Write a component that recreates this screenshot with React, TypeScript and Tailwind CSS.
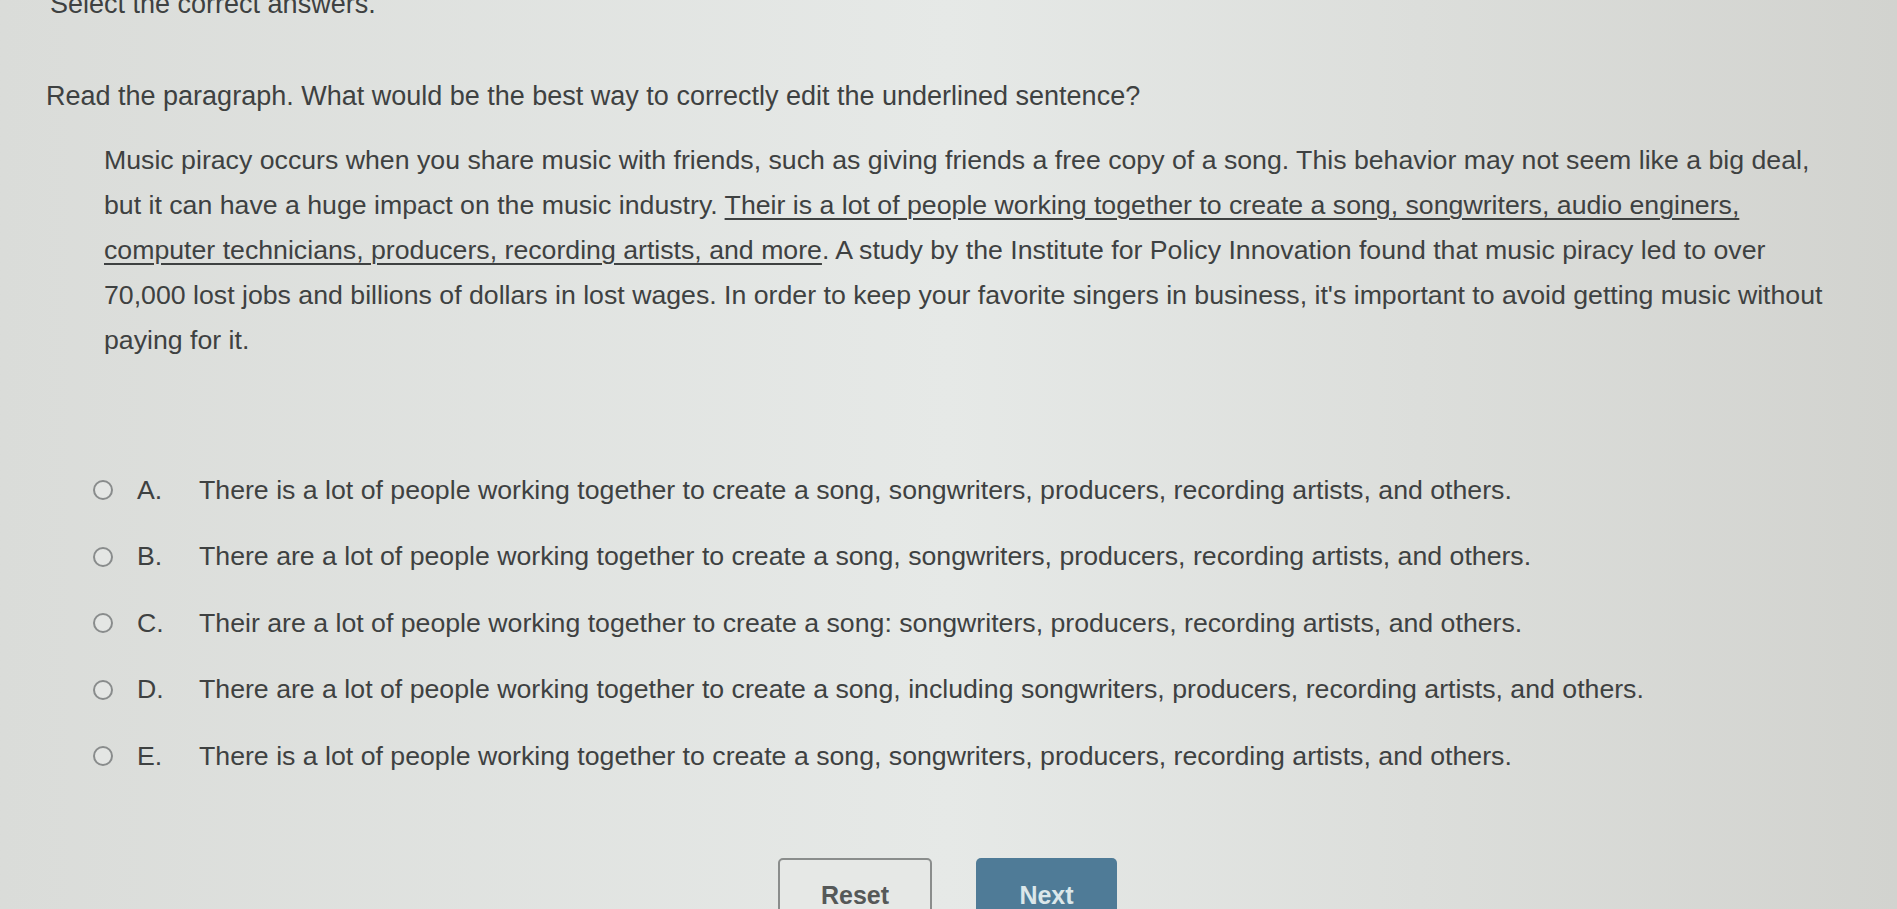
import React from "react";

const options: { letter: string; text: string }[] = [
  { letter: "A.", text: "There is a lot of people working together to create a song, songwriters, producers, recording artists, and others." },
  { letter: "B.", text: "There are a lot of people working together to create a song, songwriters, producers, recording artists, and others." },
  { letter: "C.", text: "Their are a lot of people working together to create a song: songwriters, producers, recording artists, and others." },
  { letter: "D.", text: "There are a lot of people working together to create a song, including songwriters, producers, recording artists, and others." },
  { letter: "E.", text: "There is a lot of people working together to create a song, songwriters, producers, recording artists, and others." },
];

export default function App() {
  return (
    <div
      className="w-full h-[909px] overflow-hidden bg-linear-to-r from-[#dadcd9] via-[#e6e9e7] to-[#d2d3cf] text-[#3e4141] text-[27px] leading-[45px]"
      style={{ fontFamily: '"Liberation Sans", Arial, sans-serif' }}
    >
      <div className="pl-[50px] -mt-[18px] whitespace-nowrap">Select the correct answers.</div>

      <div className="pl-[46px] mt-[47px] whitespace-nowrap">
        Read the paragraph. What would be the best way to correctly edit the underlined sentence?
      </div>

      <div className="pl-[104px] mt-[19px] whitespace-nowrap text-[26.7px]">
        <div>
          Music piracy occurs when you share music with friends, such as giving friends a free copy of a song. This behavior may not seem like a big deal,
        </div>
        <div>
          but it can have a huge impact on the music industry.{" "}
          <span className="underline decoration-2 underline-offset-[4px]">
            Their is a lot of people working together to create a song, songwriters, audio enginers,
          </span>
        </div>
        <div>
          <span className="underline decoration-2 underline-offset-[4px]">
            computer technicians, producers, recording artists, and more
          </span>
          . A study by the Institute for Policy Innovation found that music piracy led to over
        </div>
        <div>
          70,000 lost jobs and billions of dollars in lost wages. In order to keep your favorite singers in business, it's important to avoid getting music without
        </div>
        <div>paying for it.</div>
      </div>

      <div className="mt-[94px] pl-[93px] flex flex-col text-[26.7px]">
        {options.map((o) => (
          <div key={o.letter} className="h-[66.5px] flex items-center whitespace-nowrap">
            <span className="w-[20px] h-[20px] rounded-full border-2 border-[#898c8c] bg-[#e4e6e4] shrink-0" />
            <span className="ml-[24px] w-[62px] shrink-0 text-[#3e4141]">{o.letter}</span>
            <span>{o.text}</span>
          </div>
        ))}
      </div>

      <div className="mt-[68px] flex justify-center gap-[44px] pr-[2px]">
        <button className="w-[154px] h-[76px] rounded-[5px] border-2 border-[#8a8d8c] bg-[#e6e8e6] text-[#555858] text-[25px] font-bold flex items-center justify-center">
          Reset
        </button>
        <button className="w-[141px] h-[76px] rounded-[5px] bg-[#4f7b97] text-[#dbe7ea] text-[25px] font-bold flex items-center justify-center">
          Next
        </button>
      </div>
    </div>
  );
}
